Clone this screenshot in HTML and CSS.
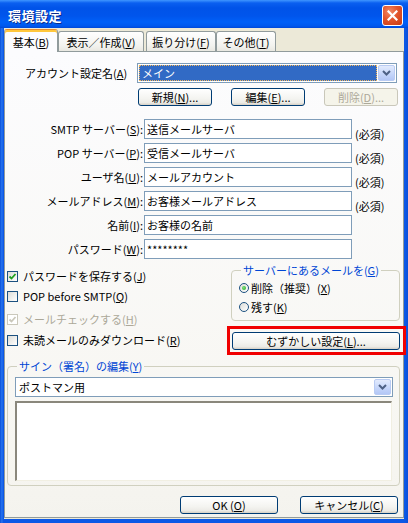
FILE: index.html
```html
<!DOCTYPE html>
<html lang="ja">
<head>
<meta charset="utf-8">
<title>環境設定</title>
<link rel="stylesheet" href="styles.css">
</head>
<body>
<div class="window">
  <div class="titlebar">
    <span class="title">環境設定</span>
    <span class="close"><svg width="11" height="11" viewBox="0 0 11 11"><path d="M1.5 1.5 L9.5 9.5 M9.5 1.5 L1.5 9.5" stroke="#fff" stroke-width="2.2" stroke-linecap="square"/></svg></span>
  </div>
  <div class="client">
    <div class="tabs">
      <div class="tab active w1">基本(<u>B</u>)</div>
      <div class="tab w2">表示／作成(<u>V</u>)</div>
      <div class="tab w3">振り分け(<u>F</u>)</div>
      <div class="tab w4">その他(<u>T</u>)</div>
    </div>
    <div class="panel">
      <div class="account-row">
        <span class="acct-label">アカウント設定名(<u>A</u>)</span>
        <div class="combo wide">
          <span class="combo-value focused">メイン</span>
          <span class="drop"><svg width="9" height="6" viewBox="0 0 9 6"><path d="M1 1 L4.5 4.5 L8 1" fill="none" stroke="#4D6185" stroke-width="2"/></svg></span>
        </div>
      </div>
      <div class="acct-buttons">
        <span class="btn small">新規(<u>N</u>)...</span>
        <span class="btn small">編集(<u>E</u>)...</span>
        <span class="btn small disabled">削除(<u>D</u>)...</span>
      </div>
      <div class="form">
        <span class="lbl">SMTP サーバー(<u>S</u>):</span><span class="input">送信メールサーバ</span><span class="req">(必須)</span>
        <span class="lbl">POP サーバー(<u>P</u>):</span><span class="input">受信メールサーバ</span><span class="req">(必須)</span>
        <span class="lbl">ユーザ名(<u>U</u>):</span><span class="input">メールアカウント</span><span class="req">(必須)</span>
        <span class="lbl">メールアドレス(<u>M</u>):</span><span class="input">お客様メールアドレス</span><span class="req">(必須)</span>
        <span class="lbl">名前(<u>I</u>):</span><span class="input">お客様の名前</span><span></span>
        <span class="lbl">パスワード(<u>W</u>):</span><span class="input">********</span><span></span>
      </div>
      <div class="lower">
        <div class="cb r1"><span class="box"><svg width="9" height="9" viewBox="0 0 9 9"><path d="M1.5 4.5 L3.5 6.5 L7.5 2" fill="none" stroke="#21A121" stroke-width="1.8"/></svg></span><span>パスワードを保存する(<u>J</u>)</span></div>
        <div class="cb r2"><span class="box"></span><span>POP before SMTP(<u>Q</u>)</span></div>
        <div class="cb r3 disabled"><span class="box"><svg width="9" height="9" viewBox="0 0 9 9"><path d="M1.5 4.5 L3.5 6.5 L7.5 2" fill="none" stroke="#CAC8BB" stroke-width="1.8"/></svg></span><span>メールチェックする(<u>H</u>)</span></div>
        <div class="cb r4"><span class="box"></span><span>未読メールのみダウンロード(<u>R</u>)</span></div>
        <fieldset class="group server">
          <legend>サーバーにあるメールを(<u>G</u>)</legend>
          <div class="radio"><span class="circle on"></span><span>削除（推奨）(<u>X</u>)</span></div>
          <div class="radio"><span class="circle"></span><span>残す(<u>K</u>)</span></div>
        </fieldset>
        <div class="adv-wrap">
          <span class="btn adv">むずかしい設定(<u>L</u>)...</span>
          <span class="highlight"></span>
        </div>
      </div>
      <fieldset class="group sig">
        <legend>サイン（署名）の編集(<u>Y</u>)</legend>
        <div class="combo full">
          <span class="combo-value plain">ポストマン用</span>
          <span class="drop"><svg width="9" height="6" viewBox="0 0 9 6"><path d="M1 1 L4.5 4.5 L8 1" fill="none" stroke="#4D6185" stroke-width="2"/></svg></span>
        </div>
        <div class="textarea"></div>
      </fieldset>
      <div class="footer">
        <span class="btn foot">OK (<u>O</u>)</span>
        <span class="btn foot">キャンセル(<u>C</u>)</span>
      </div>
    </div>
  </div>
</div>
</body>
</html>
```

FILE: styles.css
```css
* { box-sizing: border-box; }
html, body { margin: 0; padding: 0; }
body {
  width: 408px;
  height: 523px;
  overflow: hidden;
  font-family: "Noto Sans CJK JP", "Noto Sans", sans-serif;
  font-size: 11px;
  color: #000;
  background: #0C55E0;
}
u { text-decoration: underline; text-underline-offset: 1px; }

.window {
  width: 408px;
  height: 523px;
  display: flex;
  flex-direction: column;
  background: linear-gradient(90deg, #0A4FD8 0, #2A78F2 2px, #0C58E6 3px, #0C58E6 calc(100% - 3px), #0A4FD8 100%);
}

.titlebar {
  height: 28px;
  flex: none;
  display: flex;
  align-items: center;
  justify-content: space-between;
  padding: 3px 5px 0 8px;
  background: linear-gradient(180deg, #3F96FF 0, #0A5FF0 3px, #0053E8 8px, #0055EC 16px, #0060F8 22px, #0058EE 26px, #0048D8 28px);
}
.title {
  color: #fff;
  font-weight: bold;
  font-size: 13px;
  letter-spacing: 0.5px;
  text-shadow: 1px 1px 0 #0A2A8C;
}
.close {
  width: 21px;
  height: 21px;
  border: 1px solid #fff;
  border-radius: 3px;
  background: radial-gradient(circle at 35% 30%, #F08A68 0%, #E2552C 45%, #C83A12 100%);
  display: flex;
  align-items: center;
  justify-content: center;
}

.client {
  flex: 1;
  margin: 0 4px 4px;
  background: #ECE9D8;
  display: flex;
  flex-direction: column;
}

.tabs {
  height: 23px;
  flex: none;
  display: flex;
  align-items: flex-end;
}
.tab {
  height: 20px;
  display: flex;
  align-items: center;
  justify-content: center;
  border: 1px solid #919B9C;
  border-bottom: none;
  border-radius: 3px 3px 0 0;
  background: linear-gradient(180deg, #FFFFFF, #F3F3EF 70%, #E9E8E1);
  padding-top: 1px;
}
.tab.active {
  height: 23px;
  margin-bottom: -1px;
  position: relative;
  z-index: 1;
  border-top: 1px solid #E68B2C;
  box-shadow: inset 0 2px 0 #FFC73C;
  background: #FCFCFE;
  padding-top: 2px;
}
.w1 { width: 54px; }
.w2 { width: 86px; }
.w3 { width: 70px; margin-left: 2px; }
.w4 { width: 60px; }

.panel {
  flex: 1;
  margin-bottom: 1px;
  border: 1px solid #919B9C;
  background: linear-gradient(180deg, #FCFCFE, #F7F6F1 85%, #F4F3EE);
  display: flex;
  flex-direction: column;
}

.account-row {
  margin-top: 11px;
  padding-left: 20px;
  display: flex;
  align-items: center;
}
.acct-label { width: 112px; }

.combo {
  height: 20px;
  border: 1px solid #7F9DB9;
  background: #fff;
  padding: 1px;
  display: flex;
  align-items: stretch;
}
.combo.wide { width: 260px; }
.combo.full { width: 100%; }
.combo-value {
  flex: 1;
  display: flex;
  align-items: center;
  padding-left: 2px;
}
.combo-value.focused {
  background: #316AC5;
  color: #fff;
  border: 1px dotted #F2B65A;
  margin-right: 1px;
}
.drop {
  width: 17px;
  border: 1px solid #B9CBF3;
  border-radius: 2px;
  background: linear-gradient(180deg, #E3EBFD, #C4D5FA 60%, #B3C7F6);
  display: flex;
  align-items: center;
  justify-content: center;
}

.acct-buttons {
  margin-top: 5px;
  padding-left: 133px;
  display: flex;
  gap: 19px;
}

.btn {
  height: 18px;
  display: flex;
  align-items: center;
  justify-content: center;
  border: 1px solid #003C74;
  border-radius: 3px;
  background: linear-gradient(180deg, #FFFFFF, #F4F4F0 60%, #ECEBE6 85%, #D6D0C5);
  white-space: nowrap;
}
.btn.small { width: 74px; }
.btn.disabled {
  border-color: #C9C7BA;
  background: #F5F4EA;
  color: #ACA899;
}

.form {
  margin-top: 13px;
  display: grid;
  grid-template-columns: 139px 208px auto;
  grid-auto-rows: 20px;
  row-gap: 4px;
}
.lbl {
  display: flex;
  align-items: center;
  justify-content: flex-end;
  padding-right: 1px;
}
.input {
  border: 1px solid #7F9DB9;
  background: #fff;
  display: flex;
  align-items: center;
  padding-left: 2px;
}
.req {
  align-self: end;
  margin-left: 3px;
  line-height: 14px;
  margin-bottom: -2px;
}

.lower {
  display: grid;
  grid-template-columns: 226px 169px;
  grid-template-rows: 27px 20px 23px 21px;
}
.cb {
  grid-column: 1;
  align-self: end;
  height: 20px;
  display: flex;
  align-items: center;
  gap: 5px;
  padding-left: 2px;
}
.r1 { grid-row: 1; }
.r2 { grid-row: 2; }
.r3 { grid-row: 3; }
.r4 { grid-row: 4; }
.box {
  width: 11px;
  height: 11px;
  border: 1px solid #1C5180;
  background: linear-gradient(135deg, #DCDCD7, #FFFFFF);
  display: flex;
  align-items: center;
  justify-content: center;
}
.cb.disabled { color: #ACA899; }
.cb.disabled .box { border-color: #CAC8BB; background: #fff; }

.group {
  margin: 0;
  border: 1px solid #D0D0BF;
  border-radius: 4px;
}
.group legend {
  color: #0046D5;
  line-height: 14px;
  padding: 0 2px;
  margin-left: 2px;
}
.server {
  grid-column: 2;
  grid-row: 1 / 4;
  align-self: start;
  margin-top: 4px;
  height: 58px;
  padding: 1px 4px 4px 7px;
}
.radio {
  height: 19px;
  display: flex;
  align-items: center;
  gap: 2px;
}
.circle {
  width: 10px;
  height: 10px;
  border-radius: 50%;
  border: 1px solid #1C5180;
  background: linear-gradient(135deg, #DCDCD7, #FFFFFF);
  display: flex;
  align-items: center;
  justify-content: center;
}
.circle.on::after {
  content: "";
  width: 4px;
  height: 4px;
  border-radius: 50%;
  background: radial-gradient(circle at 40% 40%, #7BE27B, #21A121);
}

.adv-wrap {
  grid-column: 2;
  grid-row: 4;
  align-self: end;
  margin-left: 1px;
  position: relative;
}
.btn.adv { width: 168px; }
.highlight {
  position: absolute;
  left: -5px;
  right: -6px;
  top: -6px;
  bottom: -5px;
  border: 3px solid #F00000;
}

.sig {
  margin: 9px 3px 0 2px;
  height: 127px;
  padding: 4px 6px 4px 7px;
}
.sig .combo-value.plain { padding-left: 2px; }
.textarea {
  margin-top: 4px;
  width: 377px;
  height: 80px;
  background: #fff;
  border-top: 2px solid #8A877C;
  border-left: 2px solid #8A877C;
  border-right: 1px solid #F1EFE2;
  border-bottom: 1px solid #F1EFE2;
}

.footer {
  margin-top: 10px;
  display: flex;
  justify-content: flex-end;
  gap: 22px;
  padding-right: 5px;
}
.btn.foot { width: 98px; }
```
